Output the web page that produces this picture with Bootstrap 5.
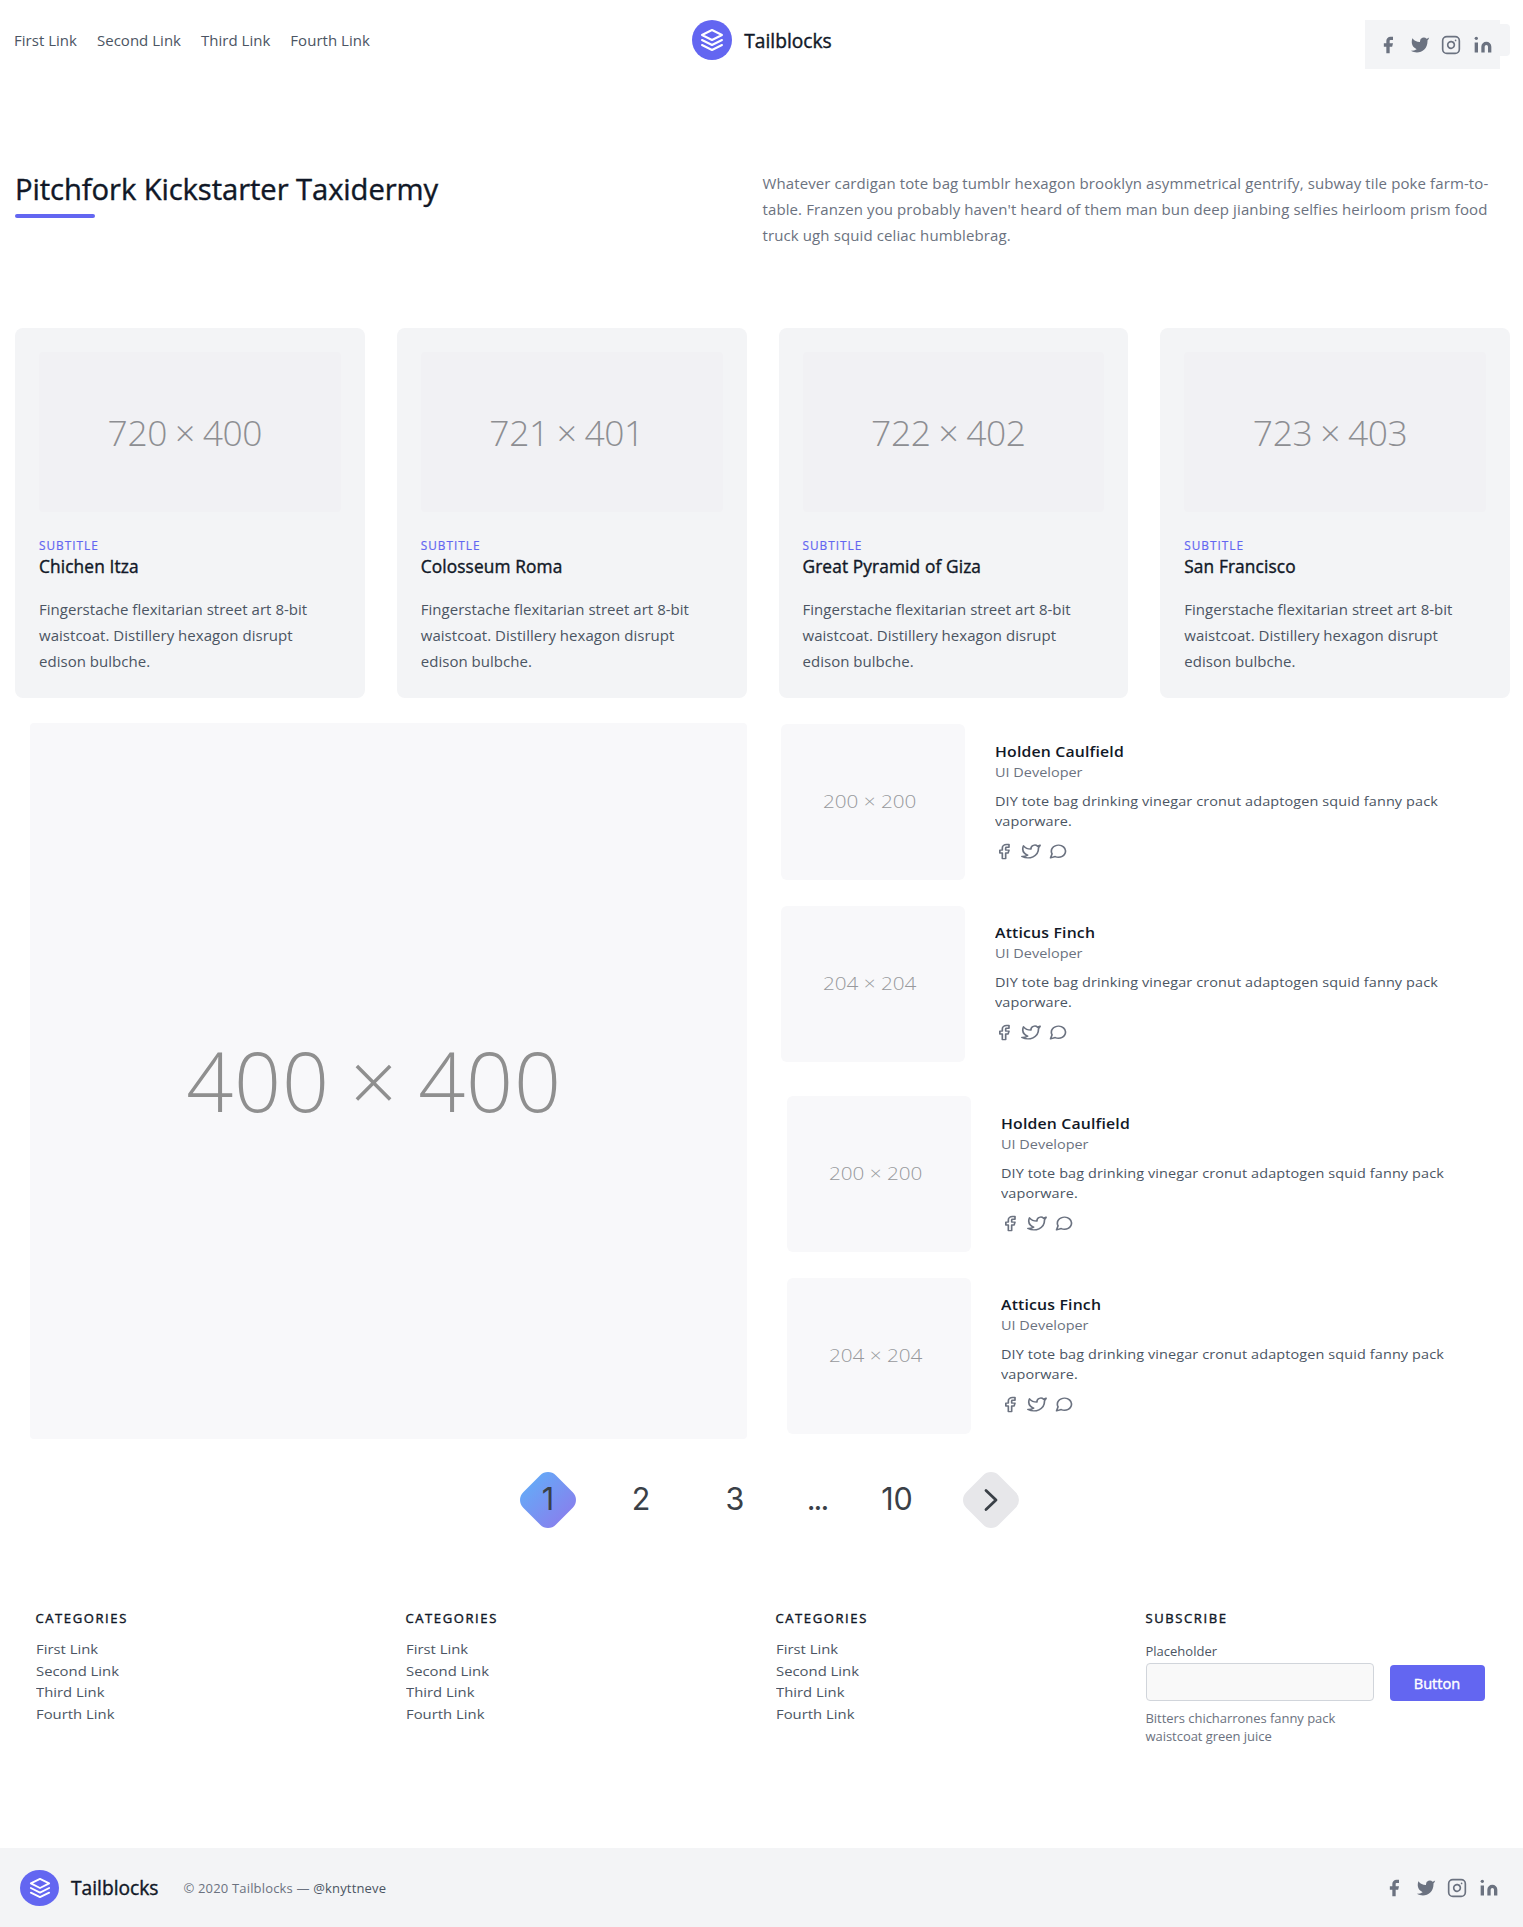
<!DOCTYPE html>
<html lang="en">
<head>
<meta charset="utf-8">
<meta name="viewport" content="width=device-width, initial-scale=1">
<title>Tailblocks</title>
<link rel="stylesheet" href="https://cdn.jsdelivr.net/npm/bootstrap@5.3.0/dist/css/bootstrap.min.css">
<script src="https://cdn.jsdelivr.net/npm/bootstrap@5.3.0/dist/js/bootstrap.bundle.min.js"></script>
<style>
  body { font-family: "Open Sans", "Noto Sans", sans-serif; font-size: 15px; line-height: 24px; color: #4b5563; background: #fff; min-height: 1927px; overflow-x: hidden; }
  a { color: inherit; text-decoration: none; }
  svg { display: block; flex: none; }
  .ink { color: #111827; }
  .muted { color: #6b7280; }
  .fw-mid { font-weight: 400; -webkit-text-stroke: .4px currentColor; }

  .site-head { height: 69px; padding: 20px 13px 0 14px; }
  .head-side { flex: 1 1 0; }
  .head-links { gap: 20px; height: 40px; letter-spacing: .02px; }
  .brand-name { font-size: 19.2px; line-height: 26px; padding-top: 1px; letter-spacing: 0; }
  .logo-disc { width: 40px; height: 40px; border-radius: 50%; background: #6366f1; flex: none; }
  .social-tab { background: #f3f4f6; width: 10px; height: 32px; margin-top: 4px; border-radius: 0 4px 4px 0; }
  .social-box { background: #f3f4f6; width: 135px; height: 49px; padding-left: 13px; }
  .social { gap: 11.6px; color: #6b7280; }

  .hero { padding: 101px 13px 0 15px; height: 259px; }
  .hero h1 { font-size: 29.2px; line-height: 36px; letter-spacing: -.08px; padding-top: 1px; margin: 0 0 7px; }
  .hero-bar { width: 80px; height: 4px; border-radius: 2px; background: #6366f1; }
  .hero-text { line-height: 26px; letter-spacing: .11px; flex: 0 0 740px; }
  .hero-title { flex: 0 0 747.5px; }

  .places { gap: 32px; padding: 0 13px 0 15px; }
  .place { flex: 1 1 0; background: #f3f4f6; border-radius: 8px; padding: 24px; height: 370px; }
  .thumb { display: flex; align-items: center; justify-content: center; font-weight: 300; white-space: nowrap; }
  .place .thumb { height: 160px; border-radius: 4px; background: #f1f1f4; color: #8d8e92; font-size: 35.4px; letter-spacing: -.35px; word-spacing: -1px; padding-right: 10px; margin-bottom: 25px; }
  .eyebrow { font-size: 11.8px; line-height: 16px; letter-spacing: 1px; color: #6366f1; }
  .place .eyebrow { -webkit-text-stroke-width: .2px; }
  .place h2 { font-size: 17.3px; line-height: 28px; letter-spacing: .12px; margin: 0 0 15px; }
  .place p { line-height: 26px; letter-spacing: .03px; margin: 0; }

  .showcase { padding: 25px 0 0 29.5px; height: 741px; }
  .big { width: 717px; height: 716px; border-radius: 4px; background: #f8f8fa; color: #8f8f8f; font-size: 82.5px; letter-spacing: .8px; word-spacing: -2px; padding: 0 28px 3px 0; }
  .team { margin-left: 34px; padding-top: 1px; flex: 1; }
  .member { height: 156px; margin-bottom: 26px; }
  .member .thumb { width: 184px; height: 156px; border-radius: 6px; background: #f8f8fa; color: #97989c; font-size: 18px; padding: 0 6px 2px 0; flex: none; }
  .member .thumb span { transform: scaleX(1.15); }
  .member-body { margin-left: 30.5px; padding-top: 17px; }
  .member:nth-child(even) .member-body { padding-top: 16px; }
  .wide { transform: scaleX(1.13); transform-origin: left; font-size: 12.8px; }
  .member h3 { font-size: 14px; line-height: 21px; letter-spacing: .15px; margin: 0; }
  .member .role { line-height: 20px; margin-bottom: 10px; }
  .member p { line-height: 19.7px; letter-spacing: .09px; margin: 0; width: 420px; }
  .member .acts { gap: 7px; margin: 12px 0 0 -1px; color: #6b7280; }
  .shifted { margin-left: 6px; }

  .pager { height: 122px; font-family: Inter, sans-serif; font-size: 30.5px; color: #3a4047; }
  .pager a { display: flex; align-items: center; justify-content: center; height: 58px; padding-bottom: 3px; }
  .pager .gem { width: 58px; position: relative; }
  .pager .gem svg { margin-top: 3px; }
  .gem::before { content: ""; position: absolute; width: 46px; height: 46px; left: 6px; top: 6px; border-radius: 11px; transform: rotate(45deg); background: #e7e7ea; }
  .gem.on::before { background: linear-gradient(90deg, #68a6f6, #8583ee); }
  .gem > * { position: relative; }
  .dots { letter-spacing: -2px; }

  .foot-cols { padding: 47px 0 0 35.5px; height: 287px; }
  .foot-cols .fcol { flex: 0 0 370px; }
  .foot-cols h4 { font-size: 13px; line-height: 20px; letter-spacing: 1.6px; margin: 0 0 11px; }
  .foot-cols li { line-height: 21.6px; }
  .foot-cols ul.wide { font-size: 13.5px; transform: scaleX(1.1); width: 200px; }
  .sub-label { font-size: 13px; line-height: 20px; margin-top: 13px; height: 22px; }
  .sub-input.form-control { width: 228px; height: 38px; padding: 0 12px; background: #f9f9f9; border: 1px solid #d1d5db; border-radius: 4px; }
  .sub-btn.btn { width: 95px; height: 36px; padding: 1px 0 0; border: 0; border-radius: 4px; background: #6366f1; color: #fff; font-size: 14.6px; line-height: 35px; }
  .sub-note { font-size: 13px; line-height: 18px; letter-spacing: -.04px; margin: 8px 0 0; }

  .foot-bar { background: #f3f4f6; height: 79px; padding: 0 24px 0 20px; }
  .foot-bar .logo-disc { width: 39px; height: 36px; }
  .foot-copy { font-size: 13px; letter-spacing: .17px; margin-left: 25px; }
</style>
</head>
<body>

<svg width="0" height="0" class="position-absolute" aria-hidden="true">
  <symbol id="layers" viewBox="0 0 24 24"><path d="M12 2L2 7l10 5 10-5-10-5zM2 17l10 5 10-5M2 12l10 5 10-5" fill="none" stroke="#fff" stroke-width="2" stroke-linecap="round" stroke-linejoin="round"/></symbol>
  <symbol id="fb" viewBox="0 0 24 24"><path fill="currentColor" d="M18 2h-3a5 5 0 00-5 5v3H7v4h3v8h4v-8h3l1-4h-4V7a1 1 0 011-1h3z"/></symbol>
  <symbol id="tw" viewBox="0 0 24 24"><path fill="currentColor" d="M23 3a10.9 10.9 0 01-3.14 1.53 4.48 4.48 0 00-7.86 3v1A10.66 10.66 0 013 4s-4 9 5 13a11.64 11.64 0 01-7 2c9 5 20 0 20-11.5a4.5 4.5 0 00-.08-.83A7.72 7.72 0 0023 3z"/></symbol>
  <symbol id="ig" viewBox="0 0 24 24"><g fill="none" stroke="currentColor" stroke-width="2" stroke-linecap="round" stroke-linejoin="round"><rect width="20" height="20" x="2" y="2" rx="5" ry="5"/><path d="M16 11.37A4 4 0 1112.63 8 4 4 0 0116 11.37zm1.5-4.87h.01"/></g></symbol>
  <symbol id="li" viewBox="0 0 24 24"><path fill="currentColor" d="M16 8a6 6 0 016 6v7h-4v-7a2 2 0 00-2-2 2 2 0 00-2 2v7h-4v-7a6 6 0 016-6zM2 9h4v12H2z"/><circle cx="4" cy="4" r="2" fill="currentColor"/></symbol>
  <symbol id="fbo" viewBox="0 0 24 24" preserveAspectRatio="none"><path fill="none" stroke="currentColor" stroke-width="2" stroke-linecap="round" stroke-linejoin="round" d="M18 2h-3a5 5 0 00-5 5v3H7v4h3v8h4v-8h3l1-4h-4V7a1 1 0 011-1h3z"/></symbol>
  <symbol id="two" viewBox="0 0 24 24" preserveAspectRatio="none"><path fill="none" stroke="currentColor" stroke-width="2" stroke-linecap="round" stroke-linejoin="round" d="M23 3a10.9 10.9 0 01-3.14 1.53 4.48 4.48 0 00-7.86 3v1A10.66 10.66 0 013 4s-4 9 5 13a11.64 11.64 0 01-7 2c9 5 20 0 20-11.5a4.5 4.5 0 00-.08-.83A7.72 7.72 0 0023 3z"/></symbol>
  <symbol id="msg" viewBox="0 0 24 24" preserveAspectRatio="none"><path fill="none" stroke="currentColor" stroke-width="2" stroke-linecap="round" stroke-linejoin="round" d="M21 11.5a8.38 8.38 0 01-.9 3.8 8.5 8.5 0 01-7.6 4.7 8.38 8.38 0 01-3.8-.9L3 21l1.9-5.7a8.38 8.38 0 01-.9-3.8 8.5 8.5 0 014.7-7.6 8.38 8.38 0 013.8-.9h.5a8.48 8.48 0 018 8v.5z"/></symbol>
</svg>

<header class="site-head d-flex align-items-start">
  <nav class="head-side head-links d-flex align-items-center">
    <a href="#">First Link</a><a href="#">Second Link</a><a href="#">Third Link</a><a href="#">Fourth Link</a>
  </nav>
  <a href="#" class="d-flex align-items-center ink">
    <span class="logo-disc d-flex align-items-center justify-content-center"><svg width="24" height="24"><use href="#layers"/></svg></span>
    <span class="brand-name fw-mid" style="margin-left:12px">Tailblocks</span>
  </a>
  <div class="head-side d-flex justify-content-end">
    <div class="social-box social d-flex align-items-center">
      <svg width="20" height="20"><use href="#fb"/></svg><svg width="20" height="20"><use href="#tw"/></svg><svg width="20" height="20"><use href="#ig"/></svg><svg width="20" height="20"><use href="#li"/></svg>
    </div>
    <div class="social-tab"></div>
  </div>
</header>

<section class="hero d-flex">
  <div class="hero-title">
    <h1 class="ink fw-mid">Pitchfork Kickstarter Taxidermy</h1>
    <div class="hero-bar"></div>
  </div>
  <p class="hero-text muted m-0">Whatever cardigan tote bag tumblr hexagon brooklyn asymmetrical gentrify, subway tile poke farm-to-<br>table. Franzen you probably haven't heard of them man bun deep jianbing selfies heirloom prism food<br>truck ugh squid celiac humblebrag.</p>
</section>

<section class="places d-flex">
  <article class="place"><div class="thumb">720 × 400</div><div class="eyebrow fw-mid">SUBTITLE</div><h2 class="ink fw-mid">Chichen Itza</h2><p>Fingerstache flexitarian street art 8-bit<br>waistcoat. Distillery hexagon disrupt<br>edison bulbche.</p></article>
  <article class="place"><div class="thumb">721 × 401</div><div class="eyebrow fw-mid">SUBTITLE</div><h2 class="ink fw-mid">Colosseum Roma</h2><p>Fingerstache flexitarian street art 8-bit<br>waistcoat. Distillery hexagon disrupt<br>edison bulbche.</p></article>
  <article class="place"><div class="thumb">722 × 402</div><div class="eyebrow fw-mid">SUBTITLE</div><h2 class="ink fw-mid">Great Pyramid of Giza</h2><p>Fingerstache flexitarian street art 8-bit<br>waistcoat. Distillery hexagon disrupt<br>edison bulbche.</p></article>
  <article class="place"><div class="thumb">723 × 403</div><div class="eyebrow fw-mid">SUBTITLE</div><h2 class="ink fw-mid">San Francisco</h2><p>Fingerstache flexitarian street art 8-bit<br>waistcoat. Distillery hexagon disrupt<br>edison bulbche.</p></article>
</section>

<section class="showcase d-flex">
  <div class="thumb big">400 × 400</div>
  <div class="team">
    <div class="member d-flex">
      <div class="thumb"><span>200 × 200</span></div>
      <div class="member-body">
        <div class="wide"><h3 class="ink fw-semibold">Holden Caulfield</h3><div class="role muted">UI Developer</div><p>DIY tote bag drinking vinegar cronut adaptogen squid fanny pack<br>vaporware.</p></div>
        <div class="acts d-flex"><svg width="20" height="17"><use href="#fbo"/></svg><svg width="20" height="17"><use href="#two"/></svg><svg width="20" height="17"><use href="#msg"/></svg></div>
      </div>
    </div>
    <div class="member d-flex" style="margin-bottom:34px">
      <div class="thumb"><span>204 × 204</span></div>
      <div class="member-body">
        <div class="wide"><h3 class="ink fw-semibold">Atticus Finch</h3><div class="role muted">UI Developer</div><p>DIY tote bag drinking vinegar cronut adaptogen squid fanny pack<br>vaporware.</p></div>
        <div class="acts d-flex"><svg width="20" height="17"><use href="#fbo"/></svg><svg width="20" height="17"><use href="#two"/></svg><svg width="20" height="17"><use href="#msg"/></svg></div>
      </div>
    </div>
    <div class="member shifted d-flex">
      <div class="thumb"><span>200 × 200</span></div>
      <div class="member-body">
        <div class="wide"><h3 class="ink fw-semibold">Holden Caulfield</h3><div class="role muted">UI Developer</div><p>DIY tote bag drinking vinegar cronut adaptogen squid fanny pack<br>vaporware.</p></div>
        <div class="acts d-flex"><svg width="20" height="17"><use href="#fbo"/></svg><svg width="20" height="17"><use href="#two"/></svg><svg width="20" height="17"><use href="#msg"/></svg></div>
      </div>
    </div>
    <div class="member shifted d-flex mb-0">
      <div class="thumb"><span>204 × 204</span></div>
      <div class="member-body">
        <div class="wide"><h3 class="ink fw-semibold">Atticus Finch</h3><div class="role muted">UI Developer</div><p>DIY tote bag drinking vinegar cronut adaptogen squid fanny pack<br>vaporware.</p></div>
        <div class="acts d-flex"><svg width="20" height="17"><use href="#fbo"/></svg><svg width="20" height="17"><use href="#two"/></svg><svg width="20" height="17"><use href="#msg"/></svg></div>
      </div>
    </div>
  </div>
</section>

<nav class="pager d-flex align-items-center" aria-label="Pages" style="padding-left:519px">
  <a href="#" class="gem on"><span>1</span></a>
  <a href="#" style="width:128px">2</a>
  <a href="#" style="width:60px">3</a>
  <a href="#" class="dots" style="width:104px">...</a>
  <a href="#" style="width:56px">10</a>
  <a href="#" class="gem" style="margin-left:37px" aria-label="Next"><svg width="14" height="24" viewBox="0 0 14 24"><path d="M2 2.5L12 12 2 21.5" fill="none" stroke="#3a4047" stroke-width="2.8" stroke-linecap="round" stroke-linejoin="round"/></svg></a>
</nav>

<section class="foot-cols d-flex">
  <div class="fcol"><h4 class="ink fw-mid">CATEGORIES</h4><ul class="list-unstyled wide m-0"><li>First Link</li><li>Second Link</li><li>Third Link</li><li>Fourth Link</li></ul></div>
  <div class="fcol"><h4 class="ink fw-mid">CATEGORIES</h4><ul class="list-unstyled wide m-0"><li>First Link</li><li>Second Link</li><li>Third Link</li><li>Fourth Link</li></ul></div>
  <div class="fcol"><h4 class="ink fw-mid">CATEGORIES</h4><ul class="list-unstyled wide m-0"><li>First Link</li><li>Second Link</li><li>Third Link</li><li>Fourth Link</li></ul></div>
  <div class="fcol">
    <h4 class="ink fw-mid">SUBSCRIBE</h4>
    <div class="sub-label">Placeholder</div>
    <div class="d-flex align-items-end" style="gap:16px"><input class="form-control sub-input" type="text" aria-label="Placeholder"><button class="btn sub-btn fw-mid" type="button">Button</button></div>
    <p class="sub-note muted">Bitters chicharrones fanny pack<br>waistcoat green juice</p>
  </div>
</section>

<footer class="foot-bar d-flex align-items-center">
  <span class="logo-disc d-flex align-items-center justify-content-center"><svg width="24" height="22"><use href="#layers"/></svg></span>
  <span class="brand-name ink fw-mid" style="margin-left:12px">Tailblocks</span>
  <span class="foot-copy muted">© 2020 Tailblocks — <a href="#" style="color:#4b5563">@knyttneve</a></span>
  <div class="social d-flex ms-auto"><svg width="20" height="20"><use href="#fb"/></svg><svg width="20" height="20"><use href="#tw"/></svg><svg width="20" height="20"><use href="#ig"/></svg><svg width="20" height="20"><use href="#li"/></svg></div>
</footer>
</body>
</html>
